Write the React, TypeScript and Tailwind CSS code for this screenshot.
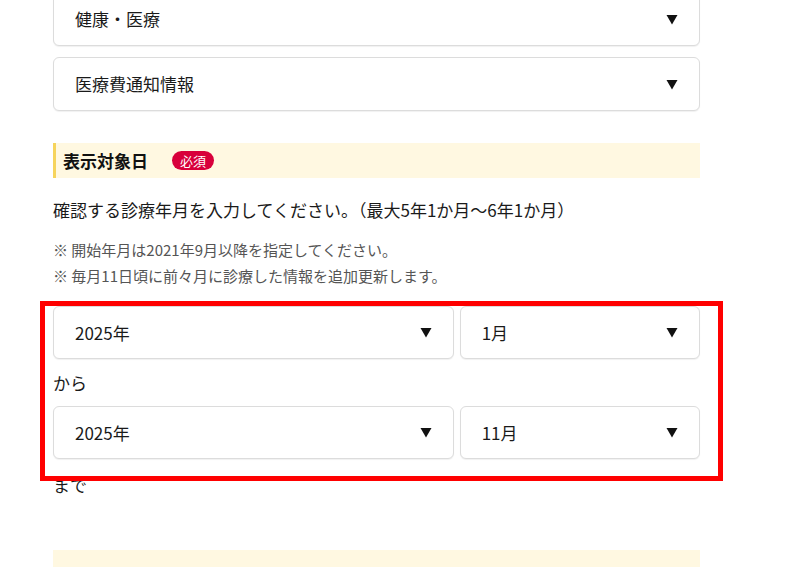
const font = { fontFamily: '"Noto Sans CJK JP", "Noto Sans", sans-serif' };

const Arrow = () => (
  <svg width="12" height="11" viewBox="0 0 12 11" className="shrink-0">
    <path d="M0.5 1 H11.5 L6 10.5 Z" fill="#111" />
  </svg>
);

const Accordion = ({ label }: { label: string }) => (
  <div className="flex h-[54px] items-center justify-between rounded-[6px] border border-[#dcdcdc] bg-white pl-[21px] pr-[21px] shadow-[0_1px_1px_rgba(0,0,0,0.06)]">
    <span className="text-[17px] text-[#1a1a1a]">{label}</span>
    <Arrow />
  </div>
);

const SelectBox = ({ value }: { value: string }) => (
  <div className="flex h-[53px] items-center justify-between rounded-[6px] border border-[#dcdcdc] bg-white pl-[21px] pr-[21px] shadow-[0_1px_1px_rgba(0,0,0,0.06)]">
    <span className="text-[17px] text-[#1a1a1a]">{value}</span>
    <Arrow />
  </div>
);

const App = () => {
  return (
    <div className="relative h-[567px] w-[811px] overflow-hidden bg-white" style={font}>
      <div className="ml-[53px] w-[647px] -mt-[8px] flex flex-col">
        <Accordion label="健康・医療" />
        <div className="mt-[11px]">
          <Accordion label="医療費通知情報" />
        </div>

        {/* 表示対象日 */}
        <div className="mt-[32px] flex h-[35px] items-center border-l-[3px] border-[#f6d45c] bg-[#fff8e1] pl-[7px]">
          <span className="text-[17px] font-bold text-[#111]">表示対象日</span>
          <span className="ml-[24px] flex h-[19px] items-center rounded-full bg-[#d8003b] px-[8px] text-[13px] leading-none text-white">
            必須
          </span>
        </div>

        <p className="mt-[20px] text-[17px] leading-[24px] text-[#1a1a1a]">
          確認する診療年月を入力してください。（最大5年1か月～6年1か月）
        </p>
        <div className="mt-[15px] text-[15px] leading-[26px] text-[#555]">
          <p>※ 開始年月は2021年9月以降を指定してください。</p>
          <p>※ 毎月11日頃に前々月に診療した情報を追加更新します。</p>
        </div>

        <div className="mt-[17px] grid grid-cols-[5fr_3fr] gap-[6px]">
          <SelectBox value="2025年" />
          <SelectBox value="1月" />
        </div>
        <p className="mt-[12px] mb-[11px] text-[17px] leading-[24px] text-[#1a1a1a]">から</p>
        <div className="grid grid-cols-[5fr_3fr] gap-[6px]">
          <SelectBox value="2025年" />
          <SelectBox value="11月" />
        </div>
        <p className="mt-[14px] text-[17px] leading-[24px] text-[#1a1a1a]">まで</p>

        <div className="mt-[53px] h-[35px] bg-[#fff8e1]" />
      </div>

      {/* highlight */}
      <div className="pointer-events-none absolute left-[40px] top-[301px] h-[180px] w-[683px] border-[5px] border-[#ff0000]" />
    </div>
  );
};

export default App;
